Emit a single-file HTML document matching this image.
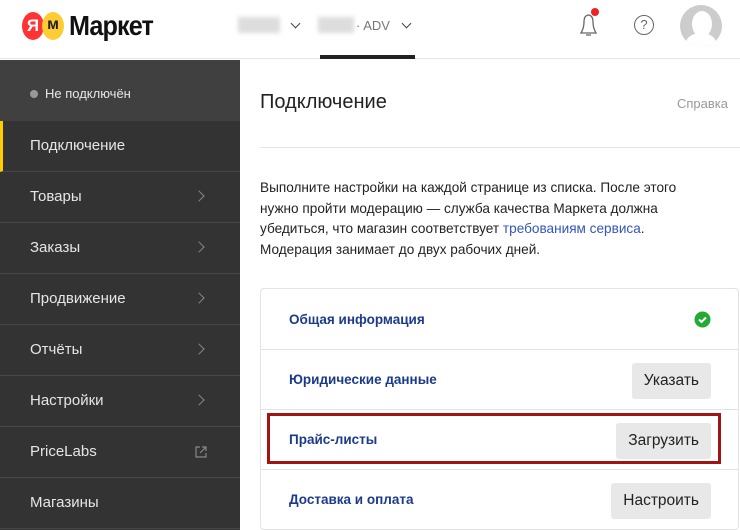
<!DOCTYPE html>
<html><head><meta charset="utf-8"><style>
*{box-sizing:border-box;margin:0;padding:0}
body{width:740px;height:530px;overflow:hidden;background:#fff;font-family:"Liberation Sans",sans-serif;position:relative}
.hdr{position:absolute;left:0;top:0;width:740px;height:59px;border-bottom:1px solid #e5e5e5}
.side{position:absolute;left:0;top:60px;width:240px;height:470px;background:#333}
.st{height:61px;background:#404040;color:#e8e8e8;font-size:13px;padding:26px 0 0 30px}
.st i{display:inline-block;width:8px;height:8px;border-radius:50%;background:#999;margin-right:7px}
.it{height:51px;border-bottom:1px solid #474747;color:#e6e6e6;font-size:15px;padding:16px 0 0 30px;position:relative}
.it.sel{border-left:3px solid #fc0;padding-left:27px}
.it .ch{position:absolute;left:195px;top:20px;width:8px;height:8px;border-right:1.2px solid #888;border-top:1.2px solid #888;transform:rotate(45deg)}
.a{position:absolute}
.card{position:absolute;left:260px;top:288px;width:479px;height:242px;border:1px solid #e3e3e3;border-radius:4px}
.row{position:absolute;left:0;width:477px;border-bottom:1px solid #e3e3e3;}
.lbl{position:absolute;left:28px;color:#1b3a8a;font-weight:bold;font-size:13.5px}
.btn{position:absolute;right:27px;background:#e8e8e8;border-radius:3px;height:36px;font-size:15.5px;color:#222;padding:9px 12px 0}
</style></head><body>
<div class="hdr">
 <div class="a" style="left:22px;top:12px;width:22px;height:28px;border-radius:50%;background:#f33;color:#fff;font-weight:bold;font-size:17px;text-align:center;line-height:28px">Я</div>
 <div class="a" style="left:42px;top:12px;width:22px;height:28px;border-radius:50%;background:#fc3;color:#222;font-weight:bold;font-size:16px;text-align:center;line-height:26px">м</div>
 <div class="a" style="left:69px;top:10px;font-size:28px;font-weight:bold;color:#111;letter-spacing:-1px;transform:scaleX(0.9);transform-origin:left">Маркет</div>
 <div class="a" style="left:238px;top:17px;width:42px;height:16px;background:#ddd;filter:blur(2px)"></div>
 <div class="a" style="left:292px;top:20px;width:7px;height:7px;border-right:1.3px solid #444;border-bottom:1.3px solid #444;transform:rotate(45deg)"></div>
 <div class="a" style="left:318px;top:17px;width:36px;height:16px;background:#ddd;filter:blur(2px)"></div>
 <div class="a" style="left:356px;top:18px;font-size:13px;color:#777">· ADV</div>
 <div class="a" style="left:403px;top:20px;width:7px;height:7px;border-right:1.3px solid #444;border-bottom:1.3px solid #444;transform:rotate(45deg)"></div>
 <div class="a" style="left:320px;top:55px;width:95px;height:4px;background:#222"></div>
 <svg class="a" style="left:576px;top:6px" width="24" height="30"><path d="M5 27 Q8 22 8 16 Q8 9 13 9 Q17 10 17 16 Q17 22 20 27 Z M10 29 h5" fill="none" stroke="#666" stroke-width="1.3"/><circle cx="19" cy="6" r="4" fill="#e22"/></svg>
 <div class="a" style="left:634px;top:15px;width:20px;height:20px;border:1.5px solid #666;border-radius:50%;font-size:13px;text-align:center;line-height:17px;color:#666">?</div>
 <div class="a" style="left:680px;top:5px;width:42px;height:42px;border-radius:50%;background:#ccc;overflow:hidden"><div style="position:absolute;left:12px;top:6px;width:20px;height:26px;border-radius:50%;background:#fff"></div><div style="position:absolute;left:6px;top:28px;width:30px;height:20px;border-radius:50% 50% 0 0;background:#fff"></div></div>
</div>
<div class="side">
 <div class="st"><i></i>Не подключён</div>
 <div class="it sel">Подключение</div>
 <div class="it">Товары<span class="ch"></span></div>
 <div class="it">Заказы<span class="ch"></span></div>
 <div class="it">Продвижение<span class="ch"></span></div>
 <div class="it">Отчёты<span class="ch"></span></div>
 <div class="it">Настройки<span class="ch"></span></div>
 <div class="it">PriceLabs<svg style="position:absolute;left:195px;top:19px" width="12" height="12"><path d="M5 1H1v10h10V7M7 1h4v4M11 1L5 7" fill="none" stroke="#888" stroke-width="1.2"/></svg></div>
 <div class="it">Магазины</div>
</div>
<div class="a" style="left:260px;top:91px;font-size:20px;color:#222">Подключение</div>
<div class="a" style="left:677px;top:96px;font-size:13px;color:#999">Справка</div>
<div class="a" style="left:260px;top:147px;width:480px;height:1px;background:#e5e5e5"></div>
<div class="a" style="left:260px;top:178px;width:470px;font-size:13.6px;line-height:20.5px;color:#222">Выполните настройки на каждой странице из списка. После этого<br>нужно пройти модерацию — служба качества Маркета должна<br>убедиться, что магазин соответствует <span style="color:#3355bb">требованиям сервиса</span>.<br>Модерация занимает до двух рабочих дней.</div>
<div class="card">
 <div class="row" style="top:0;height:61px"><span class="lbl" style="top:23px">Общая информация</span><svg class="a" style="left:433px;top:22px" width="17" height="17"><circle cx="8.5" cy="8.5" r="8" fill="#2a3"/><path d="M5 8.5l2.5 2.5 4.5-4.5" fill="none" stroke="#fff" stroke-width="2"/></svg></div>
 <div class="row" style="top:61px;height:60px"><span class="lbl" style="top:22px">Юридические данные</span><div class="btn" style="top:13px">Указать</div></div>
 <div class="row" style="top:121px;height:60px"><span class="lbl" style="top:22px">Прайс-листы</span><div class="btn" style="top:13px">Загрузить</div></div>
 <div class="row" style="top:181px;height:60px;border:0"><span class="lbl" style="top:22px">Доставка и оплата</span><div class="btn" style="top:13px">Настроить</div></div>
</div>
<div class="a" style="left:267px;top:413px;width:454px;height:51px;border:3px solid #a01414"></div>
</body></html>
